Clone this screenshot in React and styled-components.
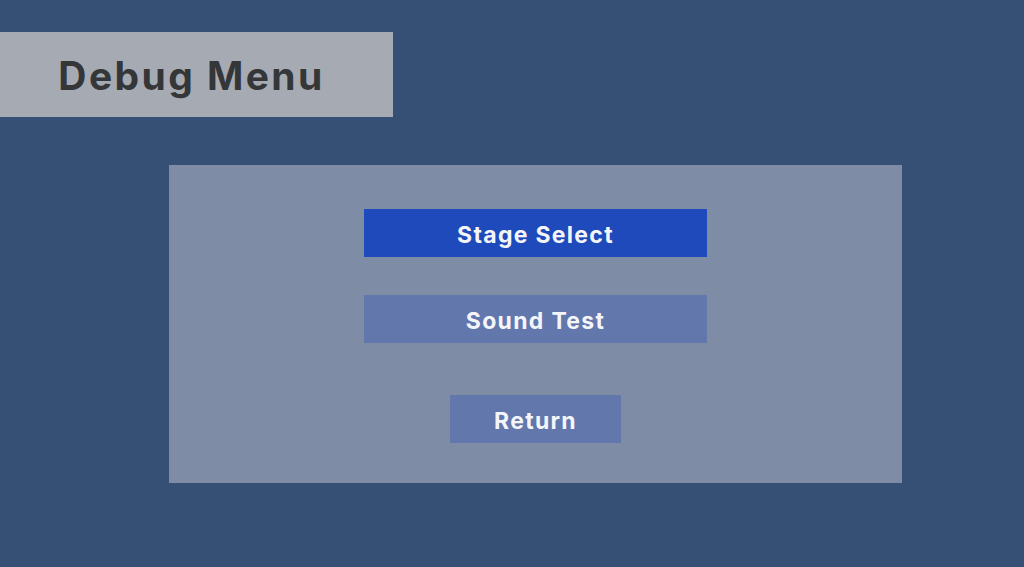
import React from "react";
import styled, { createGlobalStyle } from "styled-components";

const Global = createGlobalStyle`
  html, body {
    margin: 0;
    padding: 0;
    background: #364f75;
    font-family: Inter, "Noto Sans", "Liberation Sans", sans-serif;
  }
`;

const Screen = styled.div`
  width: 1024px;
  height: 567px;
  background: #364f75;
  display: flex;
  flex-direction: column;
  padding-top: 32px;
  box-sizing: border-box;
  overflow: hidden;
`;

const TitleBox = styled.div`
  width: 393px;
  height: 85px;
  background: #a6abb3;
  display: flex;
  align-items: center;
  justify-content: center;
  padding: 2px 10px 0 0;
  box-sizing: border-box;
  h1 {
    margin: 0;
    font-size: 39px;
    font-weight: 700;
    color: #343638;
    letter-spacing: 2.4px;
  }
`;

const Panel = styled.div`
  margin: 48px 0 0 169px;
  width: 733px;
  height: 318px;
  background: #7f8ca5;
  display: flex;
  flex-direction: column;
  align-items: center;
  padding-top: 44px;
  box-sizing: border-box;
`;

const Button = styled.button`
  width: ${p => p.$w}px;
  height: 48px;
  margin-top: ${p => p.$mt || 0}px;
  border: none;
  background: ${p => (p.$active ? "#1f4abb" : "#6277ac")};
  color: #f4f5f8;
  font-family: Inter, "Noto Sans", "Liberation Sans", sans-serif;
  font-size: 23px;
  font-weight: 700;
  letter-spacing: 1.3px;
  padding: 3px 0 0;
  cursor: pointer;
`;

export default () => {
  return (
    <Screen>
      <Global />
      <TitleBox>
        <h1>Debug Menu</h1>
      </TitleBox>
      <Panel>
        <Button $w={343} $active>
          Stage Select
        </Button>
        <Button $w={343} $mt={38}>
          Sound Test
        </Button>
        <Button $w={171} $mt={52}>
          Return
        </Button>
      </Panel>
    </Screen>
  );
};
